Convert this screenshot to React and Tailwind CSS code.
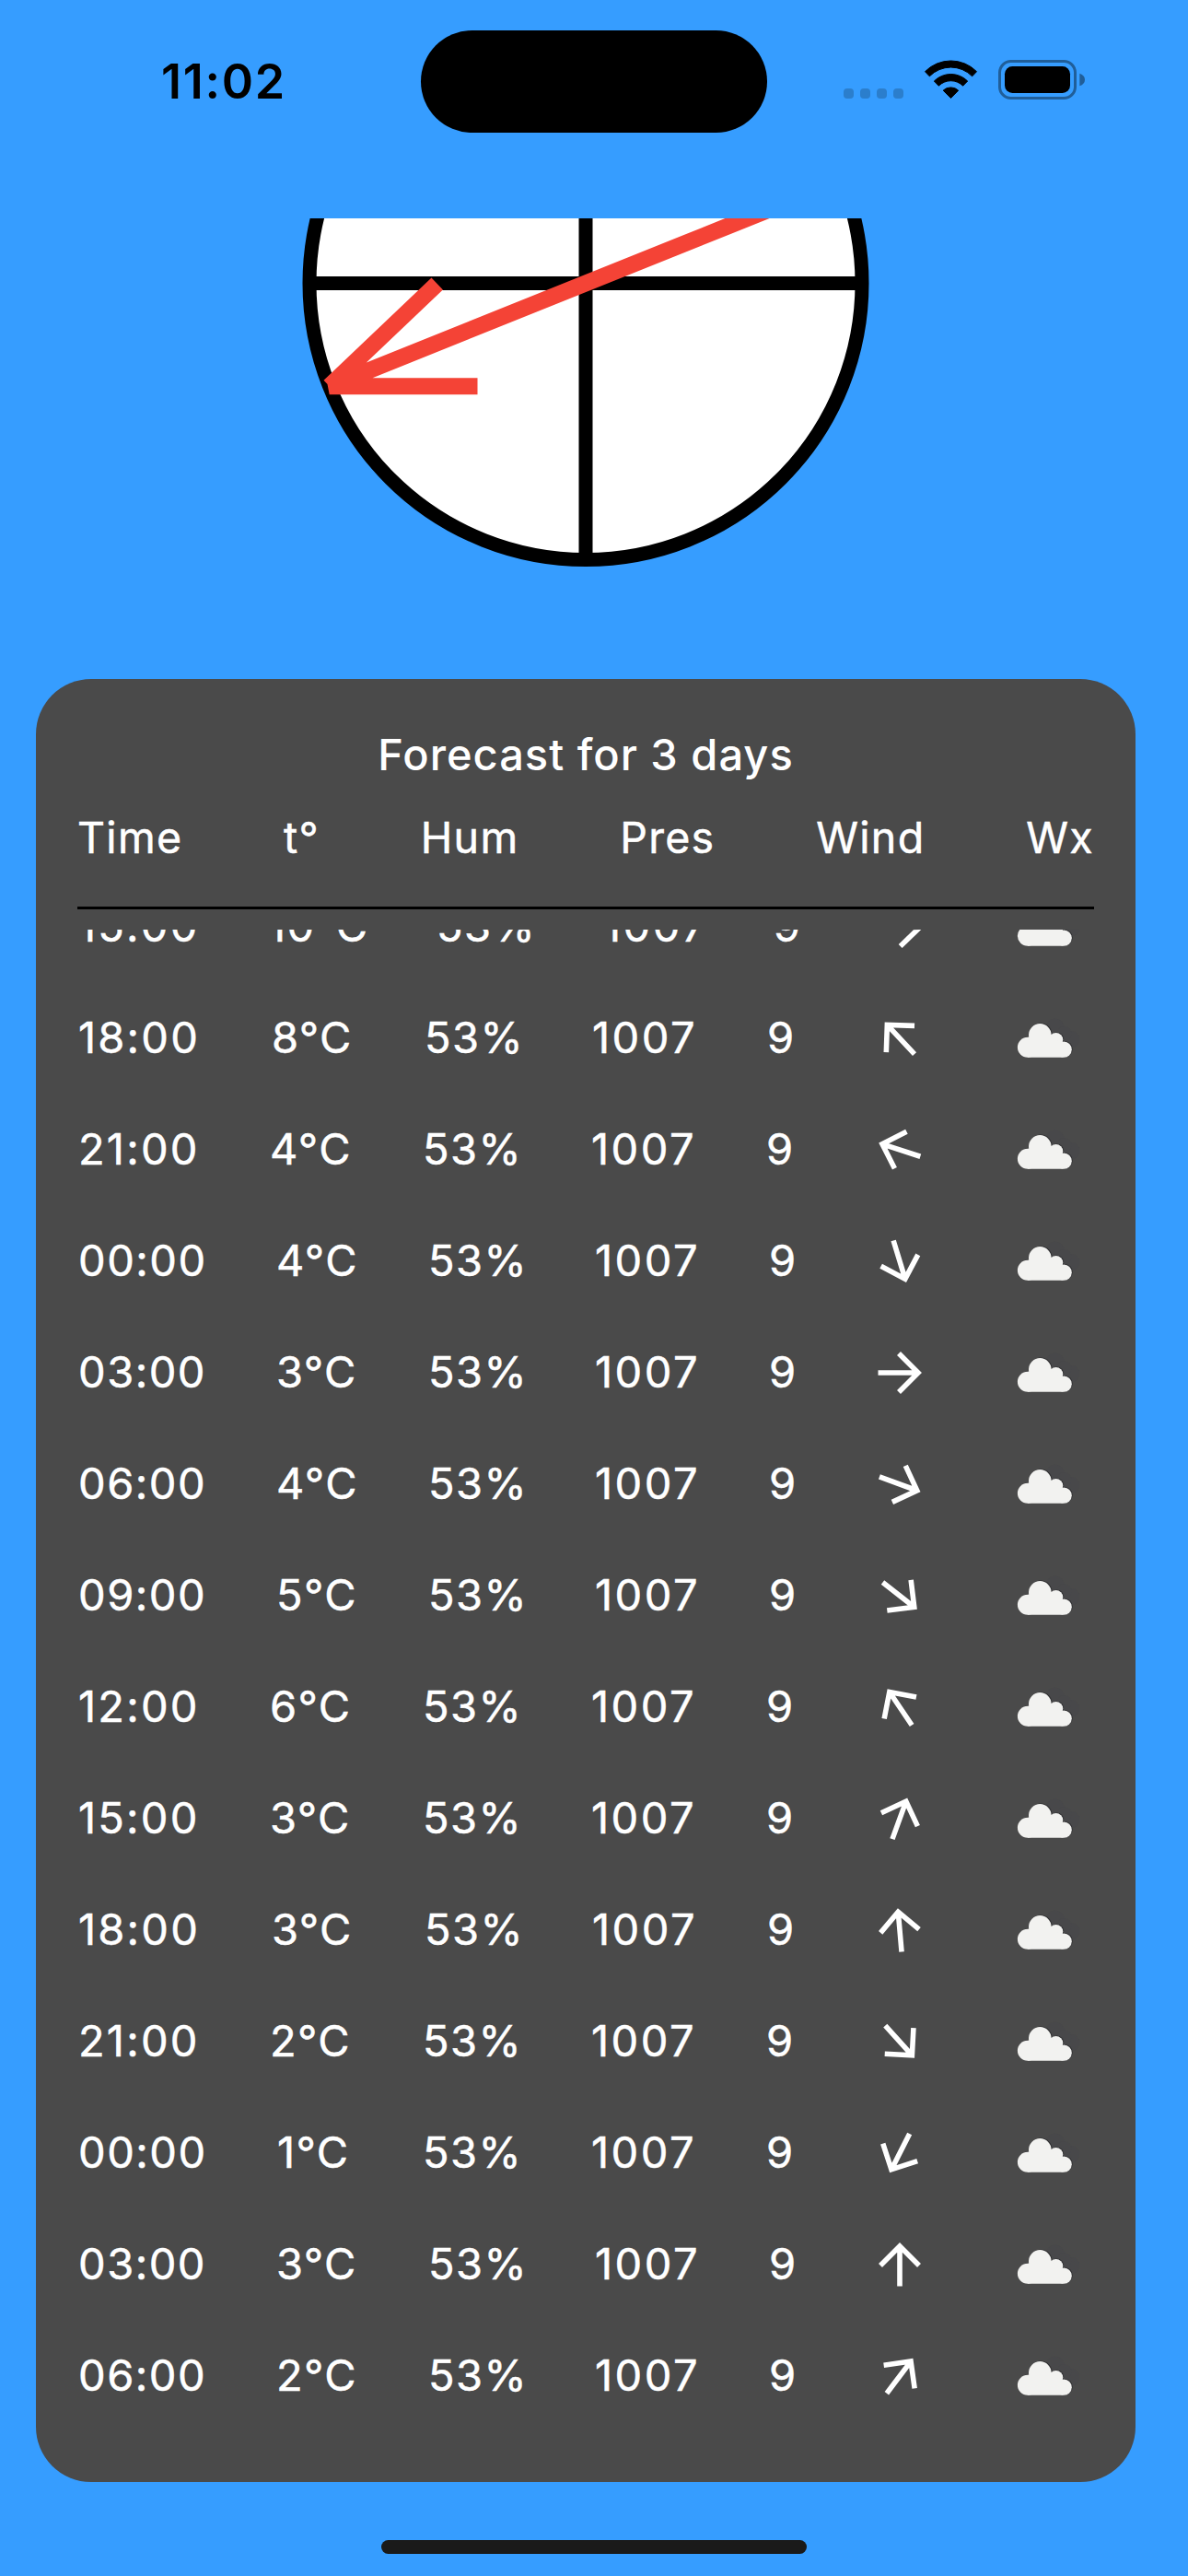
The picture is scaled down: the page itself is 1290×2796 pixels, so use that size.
import React from "react";

const WIDE = "grid-cols-[215px_165px_181px_189px_106px_163px_1fr]";
const NARROW = "grid-cols-[208px_166px_183px_190px_109px_163px_1fr]";
const MEDIUM = "grid-cols-[210px_166px_182px_190px_108px_163px_1fr]";
const FIRST = "grid-cols-[206px_183px_181px_185px_103px_161px_1fr]";
const MIXED = "grid-cols-[216px_158px_183px_190px_109px_163px_1fr]";

const ROWS = [
  ["15:00", "10°C", 91, FIRST],
  ["18:00", "8°C", -43, MEDIUM],
  ["21:00", "4°C", -72, NARROW],
  ["00:00", "4°C", 163, WIDE],
  ["03:00", "3°C", 90, WIDE],
  ["06:00", "4°C", 110, WIDE],
  ["09:00", "5°C", 128, WIDE],
  ["12:00", "6°C", -34, NARROW],
  ["15:00", "3°C", 20, NARROW],
  ["18:00", "3°C", -5, MEDIUM],
  ["21:00", "2°C", 138, NARROW],
  ["00:00", "1°C", 207, MIXED],
  ["03:00", "3°C", 0, WIDE],
  ["06:00", "2°C", 37, WIDE],
];

function Arrow({ angle }) {
  return (
    <svg width="72" height="72" viewBox="-36 -36 72 72" style={{ transform: `rotate(${angle}deg)` }}>
      <path d="M0 23.5V-19M-21 1L0 -20L21 1" fill="none" stroke="white" strokeWidth="5.6" />
    </svg>
  );
}

function CloudShape(props) {
  return (
    <g {...props}>
      <circle cx="11.300" cy="34.700" r="11" />
      <circle cx="24.700" cy="21.300" r="12.300" />
      <circle cx="42" cy="26.500" r="7.700" />
      <circle cx="50.600" cy="37.100" r="8.600" />
      <path d="M11.300 45.700V23.700H13V20H36L42 26L50 32V45.700Z" />
    </g>
  );
}

function Cloud() {
  return (
    <svg width="72" height="48" viewBox="-0.600 0.900 72 48">
      <g fill="#48484a">
        <circle cx="41" cy="13.500" r="10" />
        <circle cx="59" cy="26" r="9" />
        <circle cx="51" cy="20" r="8" />
      </g>
      <CloudShape fill="#2c2c2e" transform="translate(0.900 -0.500)" />
      <CloudShape fill="#f2f2f0" />
    </svg>
  );
}

function StatusIcons() {
  return (
    <svg width="300" height="100" viewBox="0 0 900 300" className="ml-[67px] mt-[40px]">
      <g fill="#2b7ecc">
        <rect x="48" y="168" width="33" height="33" rx="12" />
        <rect x="102" y="168" width="33" height="33" rx="12" />
        <rect x="156" y="168" width="33" height="33" rx="12" />
        <rect x="210" y="168" width="33" height="33" rx="12" />
      </g>
      <g fill="black" stroke="black" strokeWidth="3" strokeLinejoin="round">
        <path d="M313.500 113A118 118 0 0 1 481.500 113L467 128.500A97 97 0 0 0 328 128.500Z" />
        <path d="M343 144A77 77 0 0 1 452 144L437 159.500A56 56 0 0 0 358 159.500Z" />
        <path d="M372.500 174.500A36 36 0 0 1 422 174.500L397.500 199.500Z" />
      </g>
      <rect x="556.500" y="79.500" width="246" height="120" rx="37" fill="none" stroke="#205e99" strokeWidth="9" />
      <rect x="573" y="96" width="213" height="87" rx="25" fill="black" />
      <path d="M817 119Q834 125 834 139.500Q834 154 817 160Z" fill="#205e99" />
    </svg>
  );
}

export default function App() {
  return (
    <div className="flex h-[2796px] w-[1290px] flex-col overflow-hidden bg-[#369dff] font-['Inter',sans-serif]">
      <header className="flex h-[237px] shrink-0 items-start">
        <div className="ml-[175px] mt-[56px] w-[282px] text-[52px] font-semibold leading-[66px] tracking-[1.7px] text-black">11:02</div>
        <div className="mt-[33px] h-[111px] w-[376px] rounded-full bg-black" />
        <StatusIcons />
      </header>
      <section className="flex h-[500px] shrink-0 pl-[321px]">
        <svg width="630" height="390" viewBox="321 237 630 390">
          <circle cx="636" cy="307.500" r="300" fill="white" stroke="black" strokeWidth="15" />
          <path d="M336 307.500H936M636 7.500V607.500" stroke="black" strokeWidth="15" />
          <path d="M914.300 195.700L357.700 419.300H518.500M357.700 419.300L474.700 308" fill="none" stroke="#f44336" strokeWidth="18" strokeLinejoin="bevel" />
        </svg>
      </section>
      <main className="ml-[39px] flex h-[1957px] w-[1194px] shrink-0 flex-col rounded-[60px] bg-[#4a4a4a] px-[45px] text-[47px] font-normal text-white">
        <h1 className="mt-[52px] text-center font-medium leading-[60px] tracking-[1px]">Forecast for 3 days</h1>
        <div className="mt-[30px] flex justify-between text-[46.5px] leading-[60px] tracking-[1.3px] [-webkit-text-stroke:0.5px_white]">
          <span>Time</span><span>t°</span><span>Hum</span><span>Pres</span><span>Wind</span><span>Wx</span>
        </div>
        <div className="mt-[45px] h-[3px] shrink-0 bg-black" />
        <div className="mt-[22px] flex h-[1630px] flex-col justify-end overflow-hidden [-webkit-text-stroke:0.5px_white]">
          {ROWS.map(([time, temp, angle, columns], i) => (
            <div key={i} className={`grid h-[121px] shrink-0 items-center pl-px tracking-[1.4px] ${columns}`}>
              <span className={time.startsWith("0") ? "tracking-[1.5px]" : "tracking-[2.2px]"}>{time}</span>
              <span>{temp}</span>
              <span>53%</span>
              <span className="tracking-[2.5px]">1007</span>
              <span>9</span>
              <Arrow angle={angle} />
              <Cloud />
            </div>
          ))}
        </div>
      </main>
      <footer className="mt-[63px] flex justify-center">
        <div className="h-[15px] w-[462px] rounded-full bg-[#1a1a1a]" />
      </footer>
    </div>
  );
}
